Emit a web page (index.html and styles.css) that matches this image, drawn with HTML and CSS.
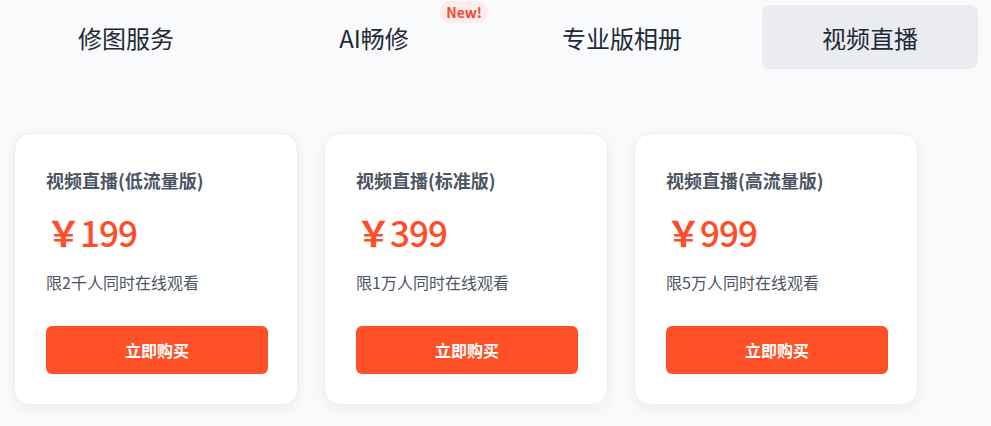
FILE: index.html
```html
<html lang="zh">
<head>
    <meta charset="UTF-8">
    <title>视频直播</title>
    <link rel="stylesheet" href="styles.css">
</head>
<body>
<div id="app">
    <div class="tabs">
        <div class="tab">修图服务</div>
        <div class="tab">AI畅修<span class="badge">New!</span></div>
        <div class="tab">专业版相册</div>
        <div class="tab active">视频直播</div>
    </div>

    <div class="cards">
        <div class="card">
            <div class="card-title">视频直播(低流量版)</div>
            <div class="price"><span class="yen">￥</span>199</div>
            <div class="desc">限2千人同时在线观看</div>
            <button class="buy">立即购买</button>
        </div>
        <div class="card">
            <div class="card-title">视频直播(标准版)</div>
            <div class="price"><span class="yen">￥</span>399</div>
            <div class="desc">限1万人同时在线观看</div>
            <button class="buy">立即购买</button>
        </div>
        <div class="card">
            <div class="card-title">视频直播(高流量版)</div>
            <div class="price"><span class="yen">￥</span>999</div>
            <div class="desc">限5万人同时在线观看</div>
            <button class="buy">立即购买</button>
        </div>
    </div>
</div>
</body>
</html>
```

FILE: styles.css
```css
body {
    margin: 0;
    padding: 0;
    background-color: #f9fafb;
    font-family: "Noto Sans CJK SC", "Noto Sans", sans-serif;
}

#app {
    padding: 5px 0 0 0;
}

.tabs {
    display: flex;
    gap: 32px;
    padding-left: 18px;
}

.tab {
    position: relative;
    width: 216px;
    height: 64px;
    display: flex;
    align-items: center;
    justify-content: center;
    font-size: 24px;
    color: #1f2937;
    border-radius: 8px;
}

.tab.active {
    background-color: #ebecef;
}

.badge {
    position: absolute;
    top: -4px;
    right: -6px;
    padding: 0 6px;
    height: 22px;
    line-height: 22px;
    border-radius: 11px;
    background-color: #fdeceb;
    color: #f04a2e;
    font-size: 14px;
    font-weight: bold;
}

.cards {
    display: flex;
    gap: 26px;
    padding: 64px 0 0 14px;
}

.card {
    width: 222px;
    padding: 32px 29px 30px 31px;
    background-color: #fff;
    border: 1px solid #eceef1;
    border-radius: 16px;
    box-shadow: 0 4px 14px rgba(30, 40, 70, 0.06);
    display: flex;
    flex-direction: column;
}

.card-title {
    font-size: 18px;
    line-height: 28px;
    font-weight: bold;
    color: #4b5563;
}

.price {
    margin-top: 14px;
    font-size: 35px;
    line-height: 48px;
    font-weight: 500;
    color: #ff4d2a;
    letter-spacing: -1px;
}

.yen {
    font-weight: bold;
}

.desc {
    margin-top: 14px;
    font-size: 16px;
    line-height: 24px;
    color: #4b5563;
}

.buy {
    margin-top: 32px;
    height: 48px;
    border: none;
    border-radius: 6px;
    background-color: #ff5028;
    color: #fff;
    font-family: inherit;
    font-size: 16px;
    font-weight: bold;
}
```
